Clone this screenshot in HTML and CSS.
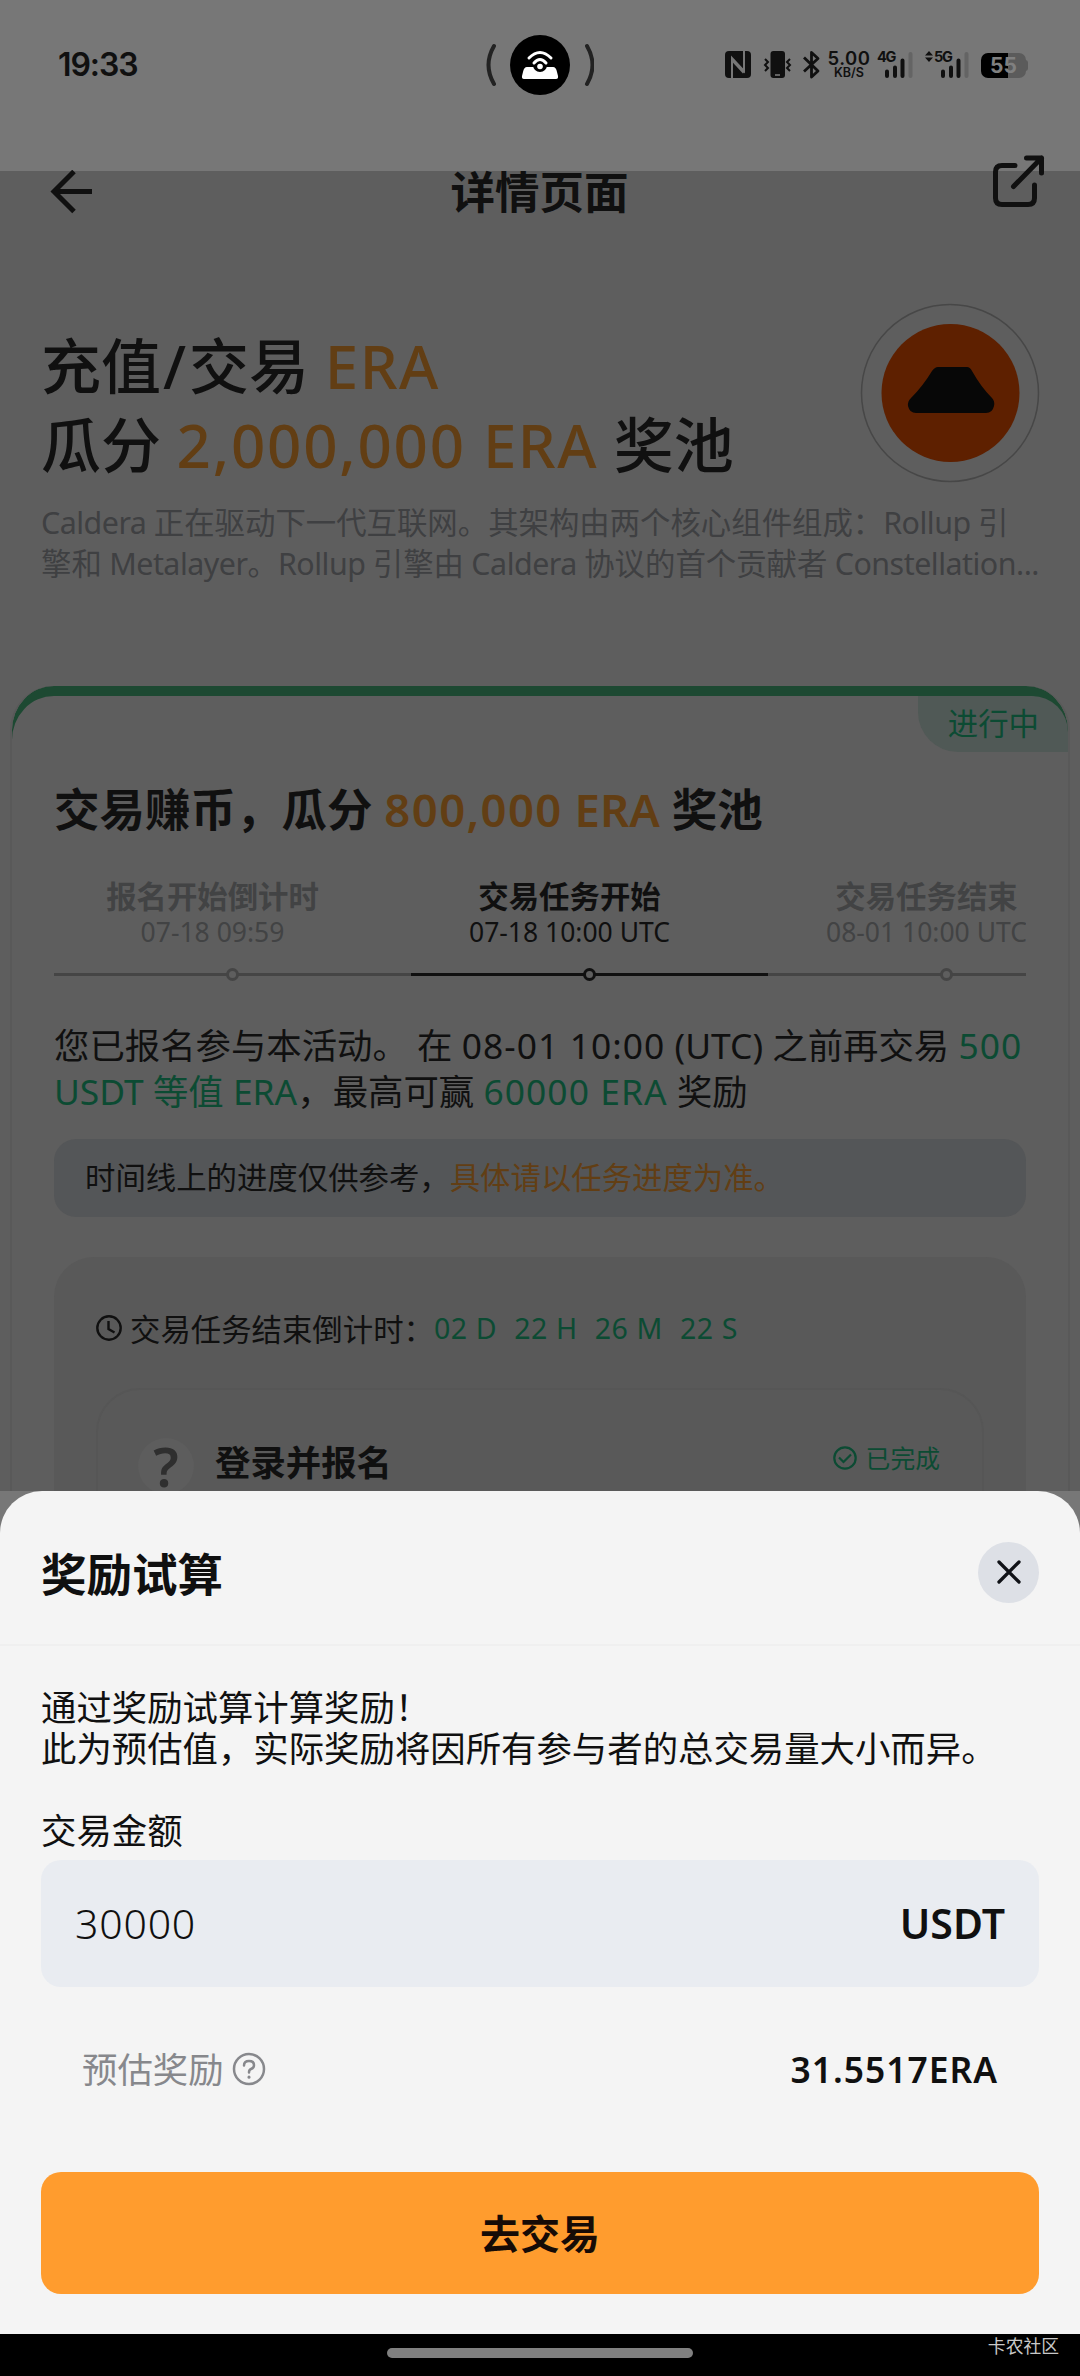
FILE: index.html
```html
<!DOCTYPE html>
<html lang="zh-CN">
<head>
<meta charset="utf-8">
<title>详情页面</title>
<link rel="stylesheet" href="styles.css">
</head>
<body>
<header class="status">
  <span class="clock">19:33</span>
  <svg class="hotspot" width="108" height="60" viewBox="486 35 108 60" fill="none">
    <path d="M494 46Q483 65 494 84M587 46Q598 65 587 84" stroke="#222" stroke-width="4" stroke-linecap="round"/>
    <circle cx="540" cy="65" r="30" fill="#000"/>
    <path d="M527 67h26q3 0 4 5l1 4q.500 3-2 3h-32q-2.500 0-2-3l1-4q1-5 4-5z" fill="#fff"/>
    <circle cx="540" cy="65" r="7" fill="#000"/>
    <path d="M529 58Q540 47 551 58M534 63Q540 56 546 63" stroke="#fff" stroke-width="3" stroke-linecap="round"/>
    <circle cx="540" cy="66.500" r="2.800" fill="#fff"/>
  </svg>
  <div class="tray">
    <svg class="tray-left" width="96" height="30" viewBox="724 50 96 30" fill="none">
      <rect x="725" y="51" width="26" height="27" rx="4" fill="#101010"/>
      <path d="M732 78V58L744 71V51" stroke="#777" stroke-width="2"/>
      <path d="M732.500 60L744 72.500" stroke="#777" stroke-width="3"/>
      <rect x="770.500" y="51" width="14.500" height="27" rx="3" fill="#101010"/>
      <path d="M775 75h5" stroke="#777" stroke-width="1.600"/>
      <path d="M765 59l3 3-3 3 3 3-3 3M790 59l-3 3 3 3-3 3 3 3" stroke="#101010" stroke-width="2"/>
      <path d="M804 57.500L818 71l-6.500 6V52.500L818 58.500 804 71.500" stroke="#101010" stroke-width="2.800" stroke-linejoin="round"/>
    </svg>
    <div class="speed"><b>5.00</b><span>KB/S</span></div>
    <div class="signal signal-4g">
      <span>4G</span>
      <svg width="28" height="26" viewBox="885 51.500 28 26"><path d="M887 71v4.500M895 67v8.500M902.500 60v15.500" stroke="#101010" stroke-width="4" stroke-linecap="round"/><path d="M910.500 53.500v22" stroke="#646464" stroke-width="4" stroke-linecap="round"/></svg>
    </div>
    <div class="signal signal-5g">
      <svg class="updown" width="8" height="11" viewBox="0 0 8 11"><path d="M0 4.500L4 0l4 4.500zM0 6.500h8L4 11z" fill="#101010"/></svg>
      <span>5G</span>
      <svg width="28" height="26" viewBox="885 51.500 28 26"><path d="M887 71v4.500M895 67v8.500M902.500 60v15.500" stroke="#101010" stroke-width="4" stroke-linecap="round"/><path d="M910.500 53.500v22" stroke="#646464" stroke-width="4" stroke-linecap="round"/></svg>
    </div>
    <div class="battery"><span>55</span></div>
  </div>
</header>

<main class="page">
  <nav class="navbar">
    <svg class="back" width="44" height="44" viewBox="50 170 44 44" fill="none" stroke="#101010" stroke-width="5"><path d="M74 171.500L54 191.500 74 211.500M54 191.500h38"/></svg>
    <h1>详情页面</h1>
    <svg class="share" width="54" height="54" viewBox="992 154 54 54" fill="none" stroke="#101010" stroke-width="5" stroke-linecap="round" stroke-linejoin="round"><path d="M1015 165.500h-13q-6.500 0-6.500 6.500v26q0 6.500 6.500 6.500h26q6.500 0 6.500-6.500v-13M1013.500 186.500l28-28.500M1026.500 158h15v15"/></svg>
  </nav>

  <section class="hero">
    <div class="hero-row">
      <h2 class="hero-title">
        <span>充值<i class="slash">/</i>交易 <em>ERA</em></span>
        <span>瓜分 <em><i class="digits">2,000,000</i> ERA</em> 奖池</span>
      </h2>
      <svg class="coin" width="180" height="180" viewBox="860 303 180 180">
        <circle cx="950" cy="393" r="88.500" fill="none" stroke="#474747" stroke-width="1.500"/>
        <circle cx="950.500" cy="393" r="69" fill="#5e2000"/>
        <path d="M938 367h29q3 0 5 4 9 16 20 27 3 3 2 8-1.500 7-8 7h-70q-6.500 0-8-7-.500-5 3-8 12-12 21-27 3-4 6-4z" fill="#070707"/>
      </svg>
    </div>
    <p class="hero-desc"><span><i>Caldera </i>正在驱动下一代互联网。其架构由两个核心组件组成：<i>Rollup </i>引</span><span>擎和<i> Metalayer</i>。<i>Rollup </i>引擎由<i> Caldera </i>协议的首个贡献者<i> Constellation...</i></span></p>
  </section>

  <section class="card">
    <div class="badge">进行中</div>
    <h3 class="card-title">交易赚币，瓜分 <em><i class="digits">800,000</i> ERA</em> 奖池</h3>
    <ol class="steps">
      <li><b>报名开始倒计时</b><span>07-18 09:59</span><i></i></li>
      <li class="active"><b>交易任务开始</b><span>07-18 10:00 UTC</span><i></i></li>
      <li><b>交易任务结束</b><span>08-01 10:00 UTC</span><i></i></li>
    </ol>
    <p class="status-text"><span>您已报名参与本活动。 在 <i class="digits">08-01 10:00</i> (UTC) 之前再交易 <mark class="digits">500</mark></span><span><mark>USDT 等值 ERA</mark>，最高可赢 <mark class="digits">60000 ERA</mark> 奖励</span></p>
    <div class="notice">时间线上的进度仅供参考，<em>具体请以任务进度为准。</em></div>
    <div class="tasks">
      <div class="countdown">
        <svg width="26" height="28" viewBox="0 0 26 28" fill="none" stroke="#101010" stroke-width="2.400"><circle cx="13" cy="14" r="11.700"/><path d="M12.500 7v8l6 3.500"/></svg>
        <span>交易任务结束倒计时：</span>
        <mark><i>02 D</i><i>22 H</i><i>26 M</i><i>22 S</i></mark>
      </div>
      <div class="task">
        <span class="task-icon">?</span>
        <b>登录并报名</b>
        <span class="done"><svg width="24" height="24" viewBox="0 0 24 24" fill="none" stroke="#0c4b33" stroke-width="2.200"><circle cx="12" cy="12" r="10.700"/><path d="M6 11.500l4.500 4.500 7.500-7.500"/></svg>已完成</span>
      </div>
    </div>
  </section>
</main>

<section class="sheet">
  <header class="sheet-head">
    <h2>奖励试算</h2>
    <button class="close" aria-label="关闭"><svg width="24" height="24" viewBox="0 0 24 24" fill="none" stroke="#101217" stroke-width="3.300" stroke-linecap="round"><path d="M2 2l20 20M22 2L2 22"/></svg></button>
  </header>
  <div class="sheet-body">
    <p>通过奖励试算计算奖励！<br>此为预估值，实际奖励将因所有参与者的总交易量大小而异。</p>
    <label>交易金额</label>
    <div class="field"><span class="amount">30000</span><b>USDT</b></div>
    <div class="estimate">
      <span>预估奖励</span>
      <svg width="34" height="34" viewBox="0 0 34 34" fill="none" stroke="#87888c" stroke-width="2.500" stroke-linecap="round"><circle cx="17" cy="17" r="15"/><path d="M12 13.500q0-4.500 5-4.500t5 4.200q0 2.800-3 3.800-2 .800-2 3.500"/><path d="M17 25v.2" stroke-width="3"/></svg>
      <b>31.5517ERA</b>
    </div>
    <button class="trade">去交易</button>
  </div>
</section>

<footer class="gesture"><div class="pill"></div><span class="mark">卡农社区</span></footer>
</body>
</html>
```
FILE: styles.css
```css
* { box-sizing: border-box; margin: 0; padding: 0; }
body {
  width: 1080px;
  height: 2376px;
  overflow: hidden;
  display: flex;
  flex-direction: column;
  background: #777;
  color: #101010;
  font-family: "Noto Sans", "Noto Sans CJK SC", sans-serif;
  white-space: nowrap;
}
em, i { font-style: normal; }
em { color: #623e14; }
mark { background: none; color: #0c4b33; }
svg { display: block; flex: none; }
button { border: 0; font: inherit; color: inherit; }

/* status bar */
.status {
  flex: none;
  height: 171px;
  padding: 35px 52px 0 58px;
  display: grid;
  grid-template-columns: 428px 108px 1fr;
  align-items: start;
  font-family: Inter, "Noto Sans", sans-serif;
}
.clock { font-size: 32px; font-weight: 600; line-height: 60px; letter-spacing: -1.100px; }
.tray { display: flex; height: 30px; margin: 15px 0 0 130px; }
.speed { width: 44px; margin-left: 7px; display: flex; flex-direction: column; align-items: center; }
.speed b { font-size: 18.500px; line-height: 17px; font-weight: 600; letter-spacing: .5px; }
.speed span { font-size: 12.500px; line-height: 12px; font-weight: 600; }
.signal { position: relative; width: 36px; height: 30px; margin-left: 6px; padding: 1.500px 0 0 8px; font-size: 14.500px; font-weight: 700; line-height: 14px; }
.signal span { position: absolute; left: 0; top: 0; letter-spacing: -1.300px; }
.signal-5g { width: 44px; margin-left: 12px; padding-left: 16px; }
.signal-5g span { left: 9px; }
.signal-5g .updown { position: absolute; left: 0; top: 1px; }
.battery {
  position: relative;
  width: 45px;
  height: 25px;
  margin: 2.500px 0 0 12px;
  border-radius: 7px;
  background: linear-gradient(90deg, #000 27px, #5b5b5b 27px);
  color: #808080;
  font-size: 21px;
  font-weight: 700;
  line-height: 25px;
  text-align: center;
}
.battery::after { content: ""; position: absolute; right: -2px; top: 7px; width: 3px; height: 11px; border-radius: 0 3px 3px 0; background: #5b5b5b; }

/* page behind the sheet */
.page { flex: none; height: 1320px; background: #5e5e5e; clip-path: inset(-20px 0 0 0); }
.navbar { height: 116px; padding: 0 34px 0 50px; display: flex; justify-content: space-between; align-items: flex-start; }
.navbar .back { margin-top: -1px; }
.navbar h1 { font-size: 44.500px; font-weight: 600; line-height: 44px; margin: -1px 0 0 -7px; }
.navbar .share { margin-top: -17px; }

.hero { padding: 16px 40px 0 41px; }
.hero-row { display: flex; justify-content: space-between; }
.hero-title { padding-top: 24px; font-size: 60px; font-weight: 500; line-height: 79px; }
.hero-title span { display: block; }
.hero-title em { letter-spacing: 1.500px; }
.slash { padding: 0 3px 0 2px; }
.digits { letter-spacing: .03em; }
.hero-desc { margin-top: 17px; color: #3f4042; font-size: 30.400px; line-height: 41px; }
.hero-desc span { display: block; }
.hero-desc i { letter-spacing: -.5px; }

.card {
  position: relative;
  height: 900px;
  margin: 102px 10px 0;
  padding: 88px 42px 0;
  border: 2px solid #595959;
  border-top: 0;
  border-radius: 44px;
  box-shadow: inset 0 10px 0 #1d4932;
}
.badge {
  position: absolute;
  right: 0;
  top: 10px;
  height: 56px;
  padding: 0 29px 0 30px;
  border-radius: 0 36px 0 40px;
  background: #505956;
  color: #0c4b33;
  font-size: 30.400px;
  line-height: 56px;
}
.card-title { font-size: 45.500px; font-weight: 600; line-height: 70px; }
.steps { display: flex; margin-top: 32px; height: 106px; overflow: hidden; list-style: none; color: #424344; }
.steps li { flex: 0 0 357px; display: flex; flex-direction: column; align-items: center; position: relative; }
.steps b { padding-right: 40px; font-size: 30.400px; font-weight: 600; line-height: 42px; }
.steps span { padding-right: 40px; font-size: 26.500px; line-height: 28px; }
.steps li::after { content: ""; width: 100%; height: 3px; margin-top: 27px; background: #454545; }
.steps i { position: absolute; left: 172px; top: 92px; width: 13px; height: 13px; border: 3px solid #454545; border-radius: 50%; background: #5e5e5e; }
.steps .active { color: #101010; }
.steps .active::after { background: #101010; }
.steps .active i { border-color: #101010; }

.status-text { margin-top: 40px; font-size: 35.400px; line-height: 46px; }
.status-text span { display: block; }
.notice { height: 78px; margin-top: 25px; padding-left: 31px; border-radius: 22px; background: #545658; font-size: 30.400px; line-height: 78px; }

.tasks { margin-top: 40px; height: 400px; padding: 50px 42px 0; border-radius: 40px; background: #595959; }
.countdown { display: flex; align-items: center; height: 42px; font-size: 30.400px; }
.countdown span { margin-left: 8px; }
.countdown mark { display: flex; gap: 17px; font-size: 28.500px; letter-spacing: .6px; }
.task { display: flex; align-items: flex-start; height: 260px; margin-top: 39px; padding: 48px 42px 0 40px; border: 2px solid #565656; border-radius: 44px; }
.task-icon { width: 56px; height: 56px; border-radius: 50%; background: #5d5d5d; color: #2f2f2f; font-size: 55px; font-weight: 600; line-height: 56px; text-align: center; }
.task b { margin-left: 21px; font-size: 35.400px; font-weight: 600; line-height: 48px; }
.done { display: flex; align-items: center; gap: 9px; margin-left: auto; color: #0c4b33; font-size: 24.800px; line-height: 40px; }

/* reward calculator sheet */
.sheet { flex: none; height: 843px; border-radius: 42px 42px 0 0; background: #f4f4f4; }
.sheet-head { height: 155px; padding: 9px 41px 0; display: flex; align-items: center; justify-content: space-between; border-bottom: 2px solid #efefef; }
.sheet-head h2 { font-size: 45.500px; font-weight: 600; }
.close { width: 61px; height: 61px; border-radius: 50%; background: #dde0e6; display: grid; place-items: center; }
.sheet-body { padding: 41px 41px 0; font-size: 35.400px; line-height: 41px; }
.sheet-body label { display: block; margin-top: 41px; }
.field { height: 127px; margin-top: 9px; padding: 0 34px; display: flex; align-items: center; justify-content: space-between; border-radius: 20px; background: #e9ecf1; font-size: 41px; }
.field .amount { font-family: "Noto Sans", sans-serif; font-weight: 350; letter-spacing: .8px; }
.field b { font-weight: 600; }
.estimate { height: 60px; margin-top: 52px; padding: 0 41px; display: flex; align-items: center; color: #87888c; }
.estimate svg { margin-left: 8px; }
.estimate b { margin-left: auto; color: #101010; font-weight: 600; letter-spacing: 1px; }
.trade { display: block; width: 100%; height: 122px; margin-top: 73px; border-radius: 20px; background: #ff9c2e; color: #160b06; font-size: 40px; font-weight: 600; }

.gesture { flex: 1; position: relative; padding-top: 14px; background: #000; }
.pill { width: 306px; height: 10px; margin: 0 auto; border-radius: 5px; background: #808080; }
.mark { position: absolute; right: 21px; top: 2px; color: #c8c8c8; font-size: 17.800px; line-height: 20px; }
```
